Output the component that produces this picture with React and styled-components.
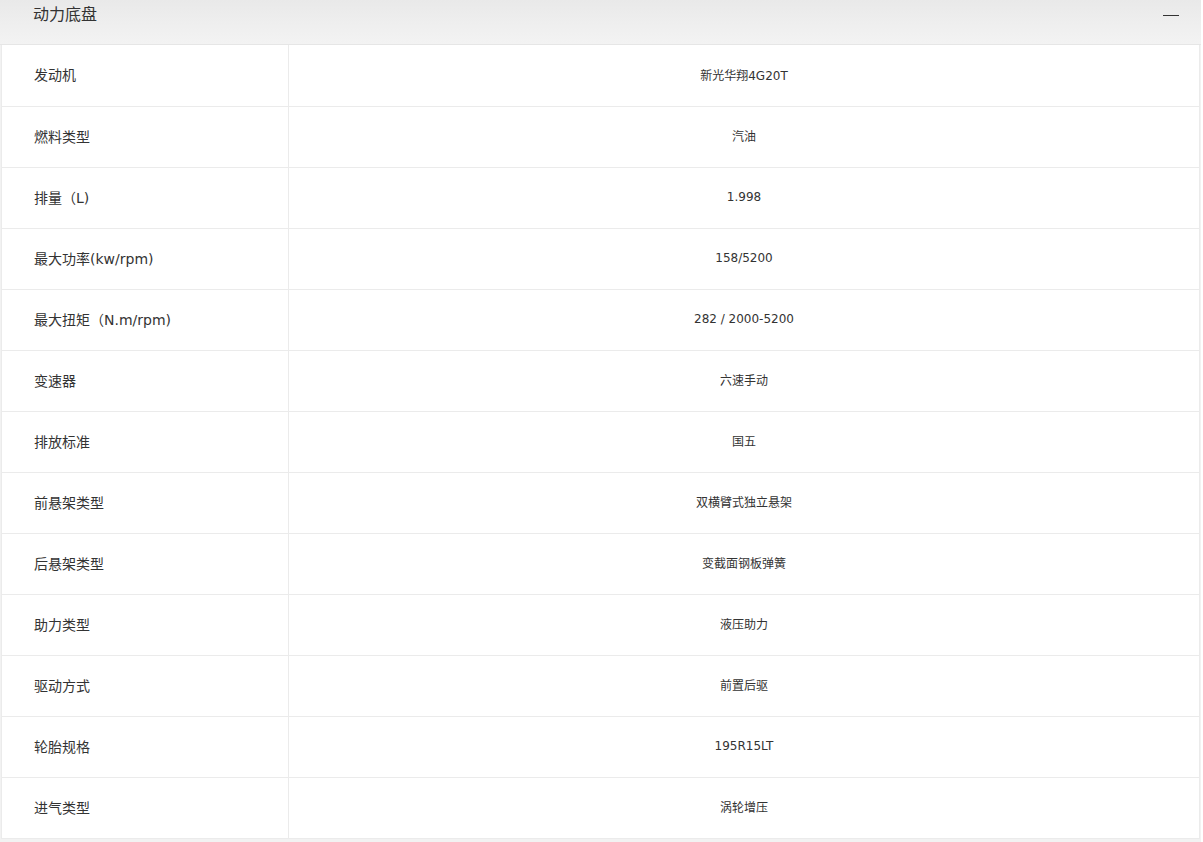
import React from "react";
import styled, { createGlobalStyle } from "styled-components";

const GlobalStyle = createGlobalStyle`
  html, body {
    margin: 0;
    padding: 0;
    background: #fff;
  }
  body {
    font-family: "DejaVu Sans", Verdana, "Noto Sans CJK SC", sans-serif;
    color: #333;
  }
`;

const Panel = styled.section`
  width: 1201px;
  background: #f2f2f2;
  padding-bottom: 8px;
`;

const Header = styled.header`
  height: 45px;
  box-sizing: border-box;
  display: flex;
  align-items: flex-start;
  justify-content: space-between;
  padding: 6px 22px 0 33px;
  background: linear-gradient(to bottom, #e9e9e9, #f3f3f3);
  border-bottom: 1px solid #e6e6e6;
`;

const Title = styled.h3`
  margin: 0;
  font-size: 16px;
  font-weight: normal;
  line-height: 18px;
  color: #333;
`;

const Collapse = styled.button`
  width: 16px;
  height: 18px;
  padding: 0;
  border: none;
  background: none;
  display: flex;
  align-items: center;
  cursor: pointer;

  &::before {
    content: "";
    display: block;
    width: 16px;
    height: 1px;
    background: #333;
  }
`;

const Table = styled.table`
  width: 1199px;
  margin-left: 1px;
  border-collapse: collapse;
  background: #fff;
  table-layout: fixed;
`;

const Row = styled.tr`
  height: 61px;
`;

const Label = styled.td`
  width: 254px;
  padding: 0 0 2px 32px;
  border: 1px solid #ebebeb;
  border-top: none;
  font-size: 14px;
  color: #333;
`;

const Value = styled.td`
  padding: 0 0 2px;
  border: 1px solid #ebebeb;
  border-top: none;
  text-align: center;
  font-size: 12px;
  color: #333;
`;

const specs = [
  ["发动机", "新光华翔4G20T"],
  ["燃料类型", "汽油"],
  ["排量（L)", "1.998"],
  ["最大功率(kw/rpm)", "158/5200"],
  ["最大扭矩（N.m/rpm)", "282 / 2000-5200"],
  ["变速器", "六速手动"],
  ["排放标准", "国五"],
  ["前悬架类型", "双横臂式独立悬架"],
  ["后悬架类型", "变截面钢板弹簧"],
  ["助力类型", "液压助力"],
  ["驱动方式", "前置后驱"],
  ["轮胎规格", "195R15LT"],
  ["进气类型", "涡轮增压"],
];

export default function App() {
  return (
    <>
      <GlobalStyle />
      <Panel>
        <Header>
          <Title>动力底盘</Title>
          <Collapse aria-label="收起" />
        </Header>
        <Table>
          <tbody>
            {specs.map(([name, value]) => (
              <Row key={name}>
                <Label>{name}</Label>
                <Value>{value}</Value>
              </Row>
            ))}
          </tbody>
        </Table>
      </Panel>
    </>
  );
}
